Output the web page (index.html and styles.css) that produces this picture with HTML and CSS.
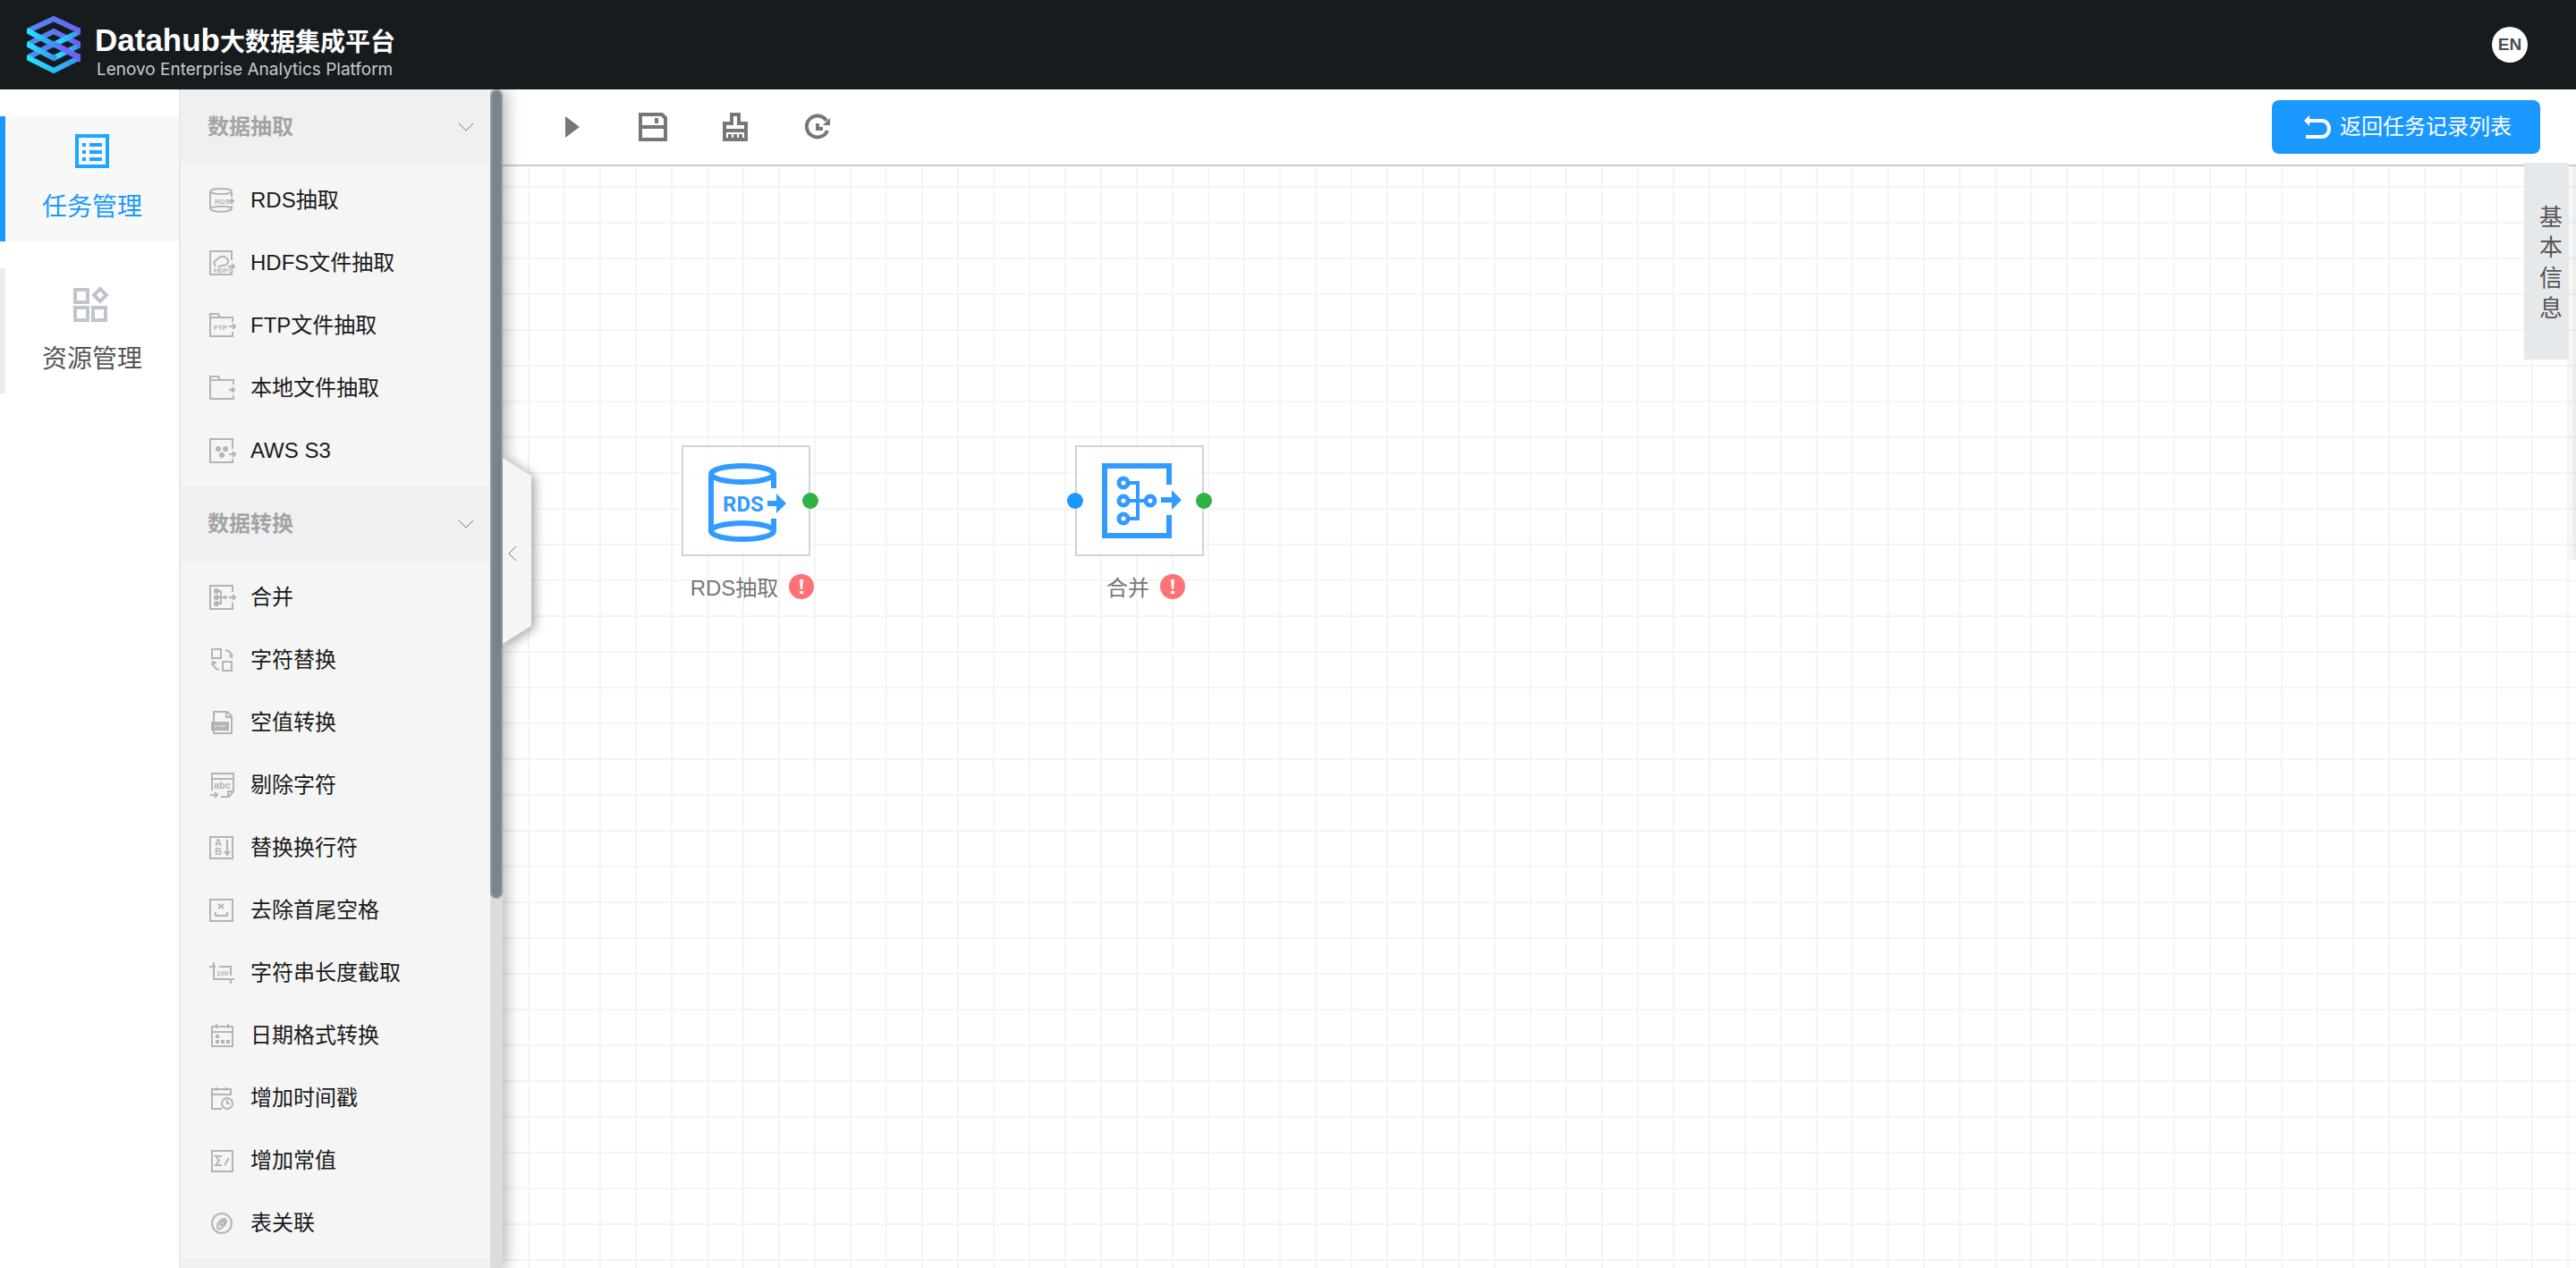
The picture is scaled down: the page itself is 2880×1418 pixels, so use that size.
FILE: index.html
```html
<!DOCTYPE html>
<html lang="zh-CN">
<head>
<meta charset="utf-8">
<title>Datahub大数据集成平台</title>
<link rel="stylesheet" href="styles.css">
</head>
<body>
<header class="topbar">
  <a class="brand" href="#">
    <svg class="brand-logo" viewBox="0 0 60 66" aria-hidden="true">
      <defs>
        <linearGradient id="g1" x1="0" y1="0" x2="1" y2="0"><stop offset="0" stop-color="#20eaff"/><stop offset="1" stop-color="#3a8df0"/></linearGradient>
        <linearGradient id="g2" x1="0" y1="0" x2="1" y2="0"><stop offset="0" stop-color="#4f8cf5"/><stop offset="1" stop-color="#6b62f0"/></linearGradient>
      </defs>
      <g fill="none" stroke-width="6">
        <path stroke="url(#g2)" d="M0 48 30 32 60 48"/>
        <path stroke="url(#g1)" d="M0 47 30 62 60 47"/>
        <path stroke="url(#g1)" d="M60 33 30 48"/>
        <path stroke="url(#g2)" d="M0 33 30 18 60 33"/>
        <path stroke="url(#g1)" d="M60 18 30 33"/>
        <path stroke="url(#g2)" d="M0 18 30 4 60 18M30 32 60 48M60 43V52M60 14V21"/>
        <path stroke="url(#g1)" d="M0 17 30 33 33 31M0 32 30 48 33 46"/>
      </g>
    </svg>
    <span class="brand-text">
      <span class="brand-name"><span class="brand-latin">Datahub</span>大数据集成平台</span>
      <span class="brand-sub">Lenovo Enterprise Analytics Platform</span>
    </span>
  </a>
  <button class="lang" type="button">EN</button>
</header>
<div class="body">
  <nav class="nav">
    <a class="nav-item active" href="#">
      <svg class="nav-icon" viewBox="0 0 40 40" aria-hidden="true"><path fill="none" stroke="currentColor" stroke-width="4" d="M3 2H37V36H3Z"/><path fill="currentColor" d="M9 10h4v4H9zM17 10h14v4H17zM9 18h4v4H9zM17 18h14v4H17zM9 26h4v4H9zM17 26h14v4H17z"/></svg>
      <span>任务管理</span>
    </a>
    <a class="nav-item" href="#">
      <svg class="nav-icon" viewBox="0 0 40 40" aria-hidden="true"><path fill="none" stroke="currentColor" stroke-width="4" d="M1 4H15V18H1ZM1 24H15V38H1ZM21 24H35V38H21ZM29 3 36 10 29 17 22 10Z"/></svg>
      <span>资源管理</span>
    </a>
  </nav>
  <aside class="panel">
    <div class="panel-scroll">
      <section class="group">
        <button class="group-head" type="button">数据抽取<svg class="chev" viewBox="0 0 18 10" aria-hidden="true"><path d="M1 1 9 9 17 1"/></svg></button>
        <ul class="items">
          <li><svg class="ico" viewBox="0 0 30 28"><path d="M1 5v18M25 5v5M25 20v3"/><ellipse cx="13" cy="4" rx="12" ry="3"/><path d="M1 23c0 5 24 5 24 0M1 23c3-3 21-3 24 0M21 15h6M24 12l3 3-3 3"/><text x="6" y="18">RDS</text></svg>RDS抽取</li>
          <li><svg class="ico" viewBox="0 0 30 28"><path d="M25 11V1H1V27H25V24M7 18c-5-6 2-7 4-10 6-4 13 3 9 7-3 4-8 0-10 4M21 18h7M25 15l3 3-3 3"/><text x="5" y="25">HDFS</text></svg>HDFS文件抽取</li>
          <li><svg class="ico" viewBox="0 0 30 28"><path d="M26 10V5H12L10 1H1V26H26V21M1 5h11M22 15h7M26 12l3 3-3 3"/><text x="5" y="19">FTP</text></svg>FTP文件抽取</li>
          <li><svg class="ico" viewBox="0 0 30 28"><path d="M27 10V5H12L10 1H1V26H27V22M1 5h11M22 16h6M25 13l3 3-3 3"/></svg>本地文件抽取</li>
          <li><svg class="ico" viewBox="0 0 30 28"><path d="M26 12V1H1V27H26V23M22 18h7M26 15l3 3-3 3"/><g fill="#b4b4b4"><circle cx="10" cy="12" r="2"/><circle cx="18" cy="12" r="2"/><circle cx="14" cy="19" r="2"/></g></svg>AWS S3</li>
        </ul>
      </section>
      <section class="group">
        <button class="group-head" type="button">数据转换<svg class="chev" viewBox="0 0 18 10" aria-hidden="true"><path d="M1 1 9 9 17 1"/></svg></button>
        <ul class="items">
          <li><svg class="ico" viewBox="0 0 30 28"><path d="M26 8V1H1V27H26V20M8 7h5v14H8M8 14h12M22 14h7M26 11l3 3-3 3"/><g fill="#b4b4b4"><circle cx="8" cy="7" r="2"/><circle cx="8" cy="14" r="2"/><circle cx="8" cy="21" r="2"/><circle cx="18" cy="14" r="1"/></g></svg>合并</li>
          <li><svg class="ico" viewBox="0 0 30 28"><path d="M3 2H13V12H3ZM15 16H25V26H15ZM18 3c4 1 7 4 7 8M22 9l3 2 1-3M11 25c-4-1-7-4-7-8M3 20l1-4 4 2"/></svg>字符替换</li>
          <li><svg class="ico" viewBox="0 0 30 28"><path d="M5 13V2H20L25 7V26H5V22M19 2v6h6"/><path fill="#b4b4b4" d="M3 14H21V22H3Z"/><path stroke="#f5f5f5" stroke-width="1" d="M6 19l3-2M11 18h7"/></svg>空值转换</li>
          <li><svg class="ico" viewBox="0 0 30 28"><path d="M3 20V1H27V21L22 27H13M3 7H27M21 27v-6h6M1 25h8M6 22l3 3-3 3"/><text class="abc" x="5" y="18">abc</text></svg>剔除字符</li>
          <li><svg class="ico" viewBox="0 0 30 28"><path d="M1 2H26V26H1ZM20 5V21M17 18l3 4 3-4"/><text class="abc" x="6" y="12">A</text><text class="abc" x="6" y="22">B</text></svg>替换换行符</li>
          <li><svg class="ico" viewBox="0 0 30 28"><path d="M1 2H26V26H1ZM10 7l6 5M16 7l-6 5M7 16v4H20v-4"/></svg>去除首尾空格</li>
          <li><svg class="ico" viewBox="0 0 30 28"><path d="M5 2V21H28M0 7H7M11 7H24V17M24 21v5"/><text x="8" y="17">100</text></svg>字符串长度截取</li>
          <li><svg class="ico" viewBox="0 0 30 28"><path d="M3 4H26V26H3ZM3 10H26M8 1v5M21 1v5"/><path fill="#b4b4b4" stroke="none" d="M7 13h4v4H7zM7 19h4v4H7zM13 19h4v4h-4zM19 19h4v4h-4z"/></svg>日期格式转换</li>
          <li><svg class="ico" viewBox="0 0 30 28"><path d="M14 26H3V4H24V10H3M8 2v4M19 2v4"/><circle cx="20" cy="20" r="6"/><path d="M20 16v4h3"/></svg>增加时间戳</li>
          <li><svg class="ico" viewBox="0 0 30 28"><path d="M3 3H26V26H3ZM14 9H7l4 5-4 5h7M17 19l5-8"/></svg>增加常值</li>
          <li><svg class="ico" viewBox="0 0 30 28"><circle cx="14" cy="14" r="11"/><path d="M10 15c-3 7 2 6 5 3 5-4 5-8 2-9-3 0-7 3-8 7M12 16c1-4 4-6 5-4 0 3-4 5-5 4"/></svg>表关联</li>
        </ul>
      </section>
      <div class="group-head"></div>
    </div>
    <div class="scrollbar"><div class="thumb"></div></div>
    <button class="collapse" type="button" aria-label="收起">
      <svg viewBox="0 0 60 232" aria-hidden="true"><path class="collapse-bg" d="M0 12 32 32V200L0 220Z"/><path class="collapse-arrow" d="M15 111 7 119 15 127"/></svg>
    </button>
  </aside>
  <main class="main">
    <div class="toolbar">
      <div class="tools">
        <button type="button" aria-label="运行"><svg viewBox="0 0 32 32"><path fill="currentColor" d="M10 4 26 16 10 28Z"/></svg></button>
        <button type="button" aria-label="保存"><svg viewBox="0 0 32 32"><path fill="currentColor" fill-rule="evenodd" d="M0 0H27L32 5V32H0ZM4 4V14H28V7L25 4ZM4 18V28H28V18ZM18 6h4v6h-4z"/></svg></button>
        <button type="button" aria-label="清空"><svg viewBox="0 0 32 32"><path fill="currentColor" fill-rule="evenodd" d="M10 0H22V10H30V32H2V10H10ZM14 4V14H6V18H26V14H18V4ZM6 22V28H8V24H12V28H14V24H18V28H20V24H24V28H26V22Z"/></svg></button>
        <button type="button" aria-label="重置"><svg viewBox="0 0 32 32"><path fill="none" stroke="currentColor" stroke-width="4" d="M26 9A12 12 0 1 0 27 20"/><path fill="currentColor" d="M30 6V14H22ZM14 12h4v4h4v4h-8z"/></svg></button>
      </div>
      <button class="back" type="button"><svg viewBox="0 0 30 26" aria-hidden="true"><path fill="none" stroke="currentColor" stroke-width="4" d="M4 6H20A8 9 0 0 1 20 24H2"/><path fill="currentColor" d="M0 6 6 0V12Z"/></svg>返回任务记录列表</button>
    </div>
    <div class="canvas">
      <div class="node node-rds">
        <div class="node-box">
          <svg viewBox="0 0 88 88"><g fill="none" stroke="#329bff" stroke-width="6"><ellipse cx="38" cy="12" rx="35" ry="9"/><path d="M3 12V76M73 12V28M73 62V76"/><ellipse cx="38" cy="76" rx="35" ry="9"/></g><path fill="#329bff" d="M66 42H76V34L87 45 76 56V48H66Z"/><text class="rds" x="16" y="54">RDS</text></svg>
          <i class="port out"></i>
        </div>
        <div class="node-label">RDS抽取<span class="warn"><svg viewBox="0 0 28 28"><path d="M12 6h4l-1 11h-2zM12 19h4v3h-4z"/></svg></span></div>
      </div>
      <div class="node node-merge">
        <div class="node-box">
          <svg viewBox="0 0 88 88"><g fill="none" stroke="#329bff" stroke-width="6"><path d="M75 24V3H3V81H75V58"/></g><g fill="none" stroke="#329bff" stroke-width="4"><path d="M26 22H40V62H26M26 42H50"/><g fill="#fff" stroke-width="5"><circle cx="24" cy="22" r="5"/><circle cx="24" cy="42" r="5"/><circle cx="24" cy="62" r="5"/><circle cx="54" cy="42" r="5"/></g></g><path fill="#329bff" d="M66 38H78V30L89 41 78 52V44H66Z"/></svg>
          <i class="port in"></i><i class="port out"></i>
        </div>
        <div class="node-label">合并<span class="warn"><svg viewBox="0 0 28 28"><path d="M12 6h4l-1 11h-2zM12 19h4v3h-4z"/></svg></span></div>
      </div>
    </div>
    <button class="info-tab" type="button">基本信息</button>
    <div class="drawer-edge"></div>
  </main>
</div>
</body>
</html>
```

FILE: styles.css
```css
* { box-sizing: border-box; }
html, body { height: 100%; }
body {
  margin: 0;
  display: flex;
  flex-direction: column;
  overflow: hidden;
  background: #fff;
  font-family: "Liberation Sans", "Noto Sans CJK SC", sans-serif;
  font-size: 24px;
  line-height: 34px;
  color: #1a1a1a;
}
button { font: inherit; color: inherit; border: 0; padding: 0; background: none; cursor: pointer; }
a { text-decoration: none; color: inherit; }
svg { display: block; overflow: visible; }

.topbar {
  flex: none;
  height: 100px;
  padding: 0 54px 0 30px;
  display: flex;
  align-items: center;
  justify-content: space-between;
  background: #161b1e;
}
.brand { display: flex; align-items: center; gap: 16px; color: #fff; }
.brand-logo { width: 60px; height: 66px; overflow: hidden; }
.brand-text { display: flex; flex-direction: column; padding-top: 12px; }
.brand-name { font-size: 28px; line-height: 40px; font-weight: 700; }
.brand-latin { font-size: 35px; }
.brand-sub { font-family: Inter, sans-serif; font-size: 19px; line-height: 20px; padding-left: 2px; color: #c8cacb; }
.lang {
  width: 40px;
  height: 40px;
  border-radius: 50%;
  background: #fff;
  color: #4a4d50;
  font-size: 19px;
  font-weight: 700;
}

.body { flex: 1; min-height: 0; display: flex; }

.nav {
  flex: none;
  width: 202px;
  padding-top: 30px;
  display: flex;
  flex-direction: column;
  gap: 30px;
  border-right: 2px solid #e4ebee;
}
.nav-item {
  height: 140px;
  padding-top: 20px;
  display: flex;
  flex-direction: column;
  align-items: center;
  gap: 22px;
  border-left: 6px solid #ebedef;
  font-size: 28px;
  line-height: 40px;
  color: #555;
}
.nav-item.active { border-left-color: #1b98ff; background: #f7f9f9; color: #1b98ff; }
.nav-icon { width: 40px; height: 40px; color: #c0c4cc; }
.active .nav-icon { color: #1ea5ff; }

.panel {
  position: relative;
  z-index: 2;
  flex: none;
  width: 360px;
  display: flex;
  background: #f5f5f5;
  box-shadow: 4px 0 16px rgba(0, 0, 0, 0.3);
  clip-path: inset(0 -60px 0 0);
}
.panel-scroll { flex: 1; overflow: hidden; }
.group-head {
  width: 100%;
  height: 84px;
  padding: 0 18px 2px 30px;
  display: flex;
  align-items: center;
  justify-content: space-between;
  border-top: 2px solid #ebeef3;
  background: #eff0f2;
  color: #a3a3a3;
  font-weight: 700;
}
.chev { width: 18px; height: 10px; fill: none; stroke: #777; stroke-width: 1; }
.items { margin: 0; padding: 5px 0; list-style: none; }
.items li {
  height: 70px;
  padding-left: 32px;
  display: flex;
  align-items: center;
  gap: 16px;
}
.ico {
  width: 30px;
  height: 28px;
  fill: none;
  stroke: #b4b4b4;
  stroke-width: 2;
}
.ico text { font-size: 8px; font-weight: 700; fill: #b4b4b4; stroke: none; }
.ico .abc { font-size: 11px; }
.scrollbar { flex: none; width: 14px; background: #dcdcdc; }
.thumb {
  height: 68.7%;
  border: 2px solid #929aa4;
  border-radius: 7px;
  background: #79848f;
}
.collapse { position: absolute; left: 100%; top: 400px; width: 60px; height: 232px; }
.collapse svg { width: 60px; height: 232px; }
.collapse-bg { fill: #f5f5f5; filter: drop-shadow(4px 2px 6px rgba(0, 0, 0, 0.35)); }
.collapse-arrow { fill: none; stroke: #6f7690; stroke-width: 1; }

.main { position: relative; flex: 1; min-width: 0; display: flex; flex-direction: column; }
.toolbar {
  flex: none;
  height: 86px;
  padding: 0 40px 0 60px;
  display: flex;
  align-items: center;
  justify-content: space-between;
  border-bottom: 2px solid #c8cdd3;
}
.tools { display: flex; gap: 60px; color: #777; }
.tools svg { width: 32px; height: 32px; }
.back {
  width: 300px;
  height: 60px;
  padding-left: 4px;
  display: flex;
  align-items: center;
  justify-content: center;
  gap: 10px;
  border-radius: 8px;
  background: #1b98ff;
  color: #fff;
}
.back svg { width: 30px; height: 26px; }

.canvas {
  position: relative;
  flex: 1;
  background-image:
    linear-gradient(90deg, #f4f4f4 2px, transparent 2px),
    linear-gradient(#f4f4f4 2px, transparent 2px);
  background-size: 40px 40px;
  background-position: 28px 22px;
}
.node { position: absolute; top: 312px; width: 144px; }
.node-rds { left: 200px; }
.node-merge { left: 640px; }
.node-box {
  position: relative;
  height: 124px;
  padding: 18px 28px;
  border: 2px solid #d0d4d8;
  background: rgba(255, 255, 255, 0.8);
}
.node-box svg { width: 88px; height: 88px; }
.port { position: absolute; top: 51px; width: 18px; height: 18px; border-radius: 50%; }
.port.out { right: -11px; background: #2db344; }
.port.in { left: -11px; background: #1b98ff; }
.node-label {
  display: flex;
  justify-content: center;
  gap: 12px;
  margin-top: 18px;
  padding-left: 14px;
  line-height: 36px;
  white-space: nowrap;
  color: #777;
}
.warn { width: 28px; height: 28px; margin-top: 2px; border-radius: 50%; background: #ff7276; }
.warn svg { width: 28px; height: 28px; fill: #fff; }
.rds { font-family: Roboto, sans-serif; font-size: 24px; font-weight: 700; fill: #329bff; }

.info-tab {
  position: absolute;
  right: 8px;
  top: 82px;
  width: 50px;
  height: 220px;
  padding: 4px 4px 0 14px;
  background: #e5e9ec;
  color: #555;
  font-size: 26px;
  line-height: 34px;
}
.drawer-edge {
  position: absolute;
  right: 0;
  top: 86px;
  width: 10px;
  height: 440px;
  background: linear-gradient(90deg, rgba(0, 0, 0, 0), rgba(0, 0, 0, 0.08));
}
```
